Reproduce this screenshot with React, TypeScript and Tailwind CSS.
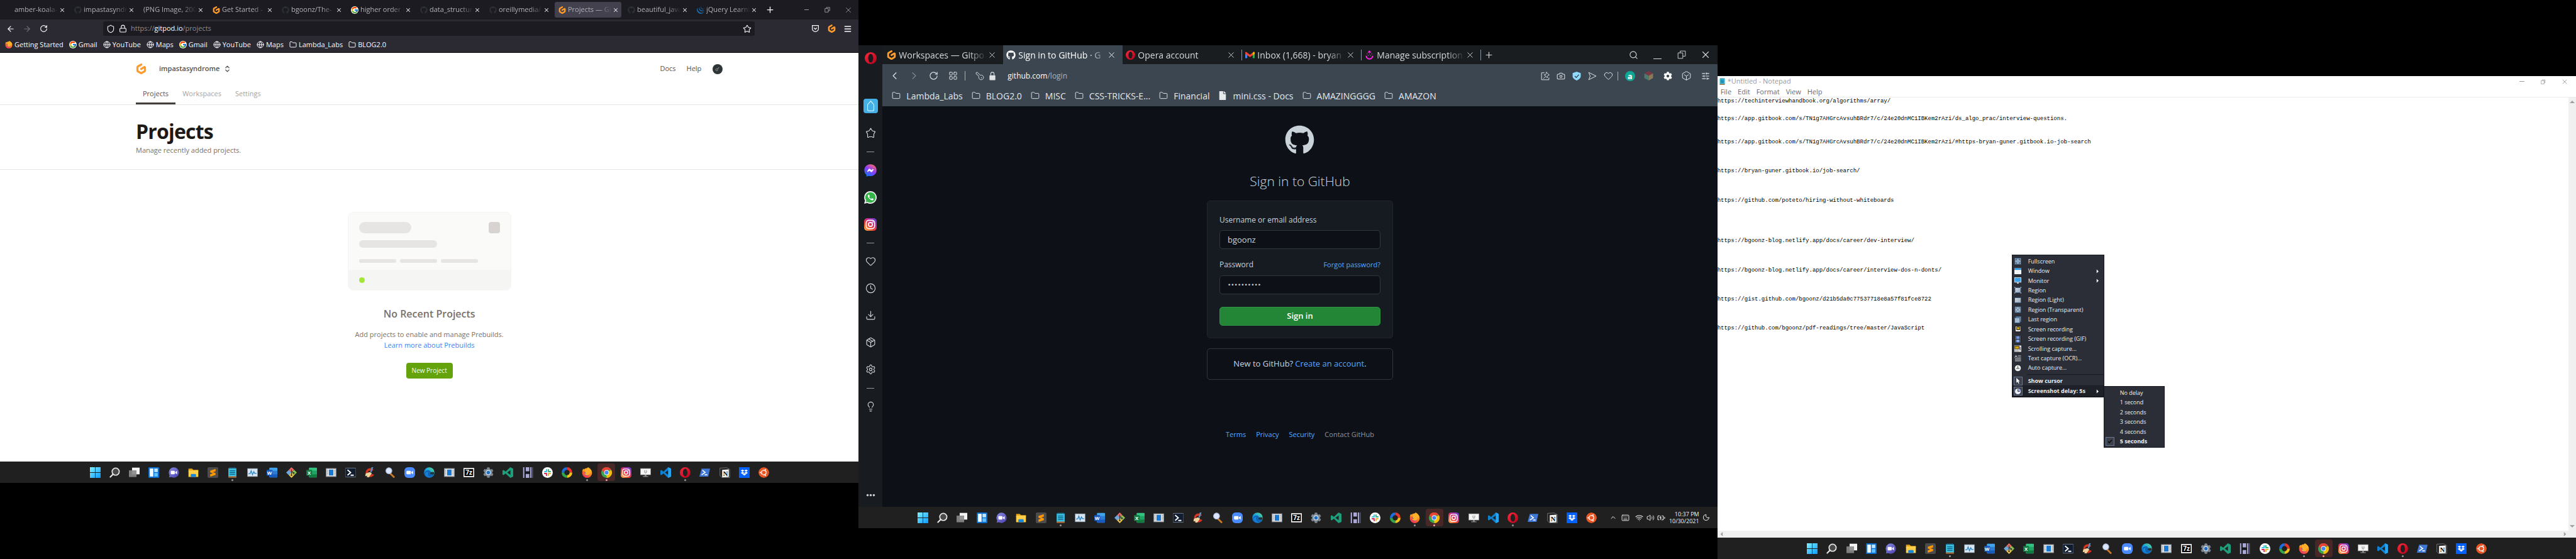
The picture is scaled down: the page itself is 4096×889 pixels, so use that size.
import React from "react";
import type { ReactNode } from "react";
import {
  ArrowLeft, ArrowRight, RotateCw, Shield, Lock, Star, Menu, Globe, Folder, X, Plus, Minus,
  ChevronUp, ChevronLeft, ChevronRight, Heart, Clock, Package, Settings, Lightbulb, Ellipsis, Search, LayoutGrid,
  Camera, SlidersHorizontal, KeyRound, Keyboard, Wifi, Volume2, BatteryCharging, Moon, Download,
  ChevronsUpDown,
} from "lucide-react";
import { FaGithub, FaCog, FaUbuntu, FaDropbox, FaFacebookMessenger, FaFile } from "react-icons/fa";
import { FcGoogle } from "react-icons/fc";
import { SiGitpod, SiJquery } from "react-icons/si";

/* ---------- shared artwork ---------- */

function Defs() {
  return (
    <svg className="absolute size-0" aria-hidden="true">
      <defs>
        <linearGradient id="g-win" x1="0" y1="0" x2="1" y2="1"><stop offset="0" stopColor="#7ff0ff" /><stop offset="1" stopColor="#0a9bff" /></linearGradient>
        <linearGradient id="g-ig" x1="0" y1="1" x2="0.8" y2="0"><stop offset="0" stopColor="#fdc04b" /><stop offset="0.4" stopColor="#f0452f" /><stop offset="0.7" stopColor="#c72a92" /><stop offset="1" stopColor="#6b3fd0" /></linearGradient>
        <linearGradient id="g-msg" x1="0.2" y1="1" x2="0.8" y2="0"><stop offset="0" stopColor="#0a7cff" /><stop offset="0.5" stopColor="#8a3cff" /><stop offset="1" stopColor="#ff6a6a" /></linearGradient>
        <linearGradient id="g-opera" x1="0" y1="0" x2="1" y2="1"><stop offset="0" stopColor="#ff2a3c" /><stop offset="1" stopColor="#b4001a" /></linearGradient>
        <linearGradient id="g-edge" x1="0" y1="1" x2="1" y2="0"><stop offset="0" stopColor="#0c59c4" /><stop offset="0.5" stopColor="#1ba0e0" /><stop offset="1" stopColor="#5fe08a" /></linearGradient>
        <linearGradient id="g-fox" x1="0.2" y1="1" x2="0.8" y2="0"><stop offset="0" stopColor="#f0246a" /><stop offset="0.5" stopColor="#ff7a1a" /><stop offset="1" stopColor="#ffde3b" /></linearGradient>
        <linearGradient id="g-chat" x1="0" y1="0" x2="1" y2="1"><stop offset="0" stopColor="#8a8ce0" /><stop offset="1" stopColor="#4a3fae" /></linearGradient>
        <linearGradient id="g-grey" x1="0" y1="0" x2="1" y2="1"><stop offset="0" stopColor="#d9dee5" /><stop offset="1" stopColor="#93a3b8" /></linearGradient>
      </defs>
    </svg>
  );
}

function Art({ size = "size-[17px]", children }: { size?: string; children: ReactNode }) {
  return <svg viewBox="0 0 24 24" className={`${size} shrink-0`} aria-hidden="true">{children}</svg>;
}

const code = "M17.5 0 L24 3 V21 L17.5 24 L7 14.2 L2.4 17.8 L0 16.6 V7.4 L2.4 6.2 L7 9.8 Z M17.8 6.8 L10.6 12 L17.8 17.2 Z";

function Gitpod({ size }: { size: string }) {
  return <SiGitpod className={`${size} shrink-0 text-[#ff9a2b]`} />;
}

function OperaRing({ size }: { size: string }) {
  return (
    <Art size={size}>
      <path fillRule="evenodd" fill="url(#g-opera)" d="M12 0a12 12 0 1 0 0 24a12 12 0 1 0 0-24Zm0 3.4c3 0 5 3.9 5 8.6s-2 8.6-5 8.6s-5-3.9-5-8.6s2-8.6 5-8.6Z" />
    </Art>
  );
}

function Firefox({ size }: { size: string }) {
  return (
    <Art size={size}>
      <circle cx="12" cy="13" r="11" fill="url(#g-fox)" />
      <circle cx="12" cy="13" r="6" fill="#7a3fe0" />
      <path d="M14 0c4 2 8 6 9 11c-2-3-4-3-5-3c2 5 0 9-4 10c-5 1-8-2-8-5c1 1 3 1 4 0c-3-1-4-4-2-6c-3-1-6 1-7 4c0-3 1-6 3-8l1 3c2-1 4-1 6 0c0-2 1-4 3-6Z" fill="#ffb02a" />
    </Art>
  );
}

function Instagram({ size }: { size: string }) {
  return (
    <Art size={size}>
      <rect width="24" height="24" rx="6" fill="url(#g-ig)" />
      <rect x="4" y="4" width="16" height="16" rx="5" fill="none" stroke="#fff" strokeWidth="2" />
      <circle cx="12" cy="12" r="3.8" fill="none" stroke="#fff" strokeWidth="2" />
      <circle cx="16.6" cy="7.4" r="1.2" fill="#fff" />
    </Art>
  );
}

function NotepadIcon({ size }: { size?: string }) {
  return (
    <Art size={size}>
      <rect x="3" y="2" width="18" height="21" rx="1.5" fill="#3cc0e0" />
      <rect x="3" y="20.5" width="18" height="3" fill="#b4622a" />
      <path d="M6 8h12M6 12h12M6 16h12" stroke="#0b5f86" strokeWidth="1.8" />
      <path d="M6 0v4M10 0v4M14 0v4M18 0v4" stroke="#136a90" strokeWidth="1.6" />
    </Art>
  );
}

const letter = "font-['Open_Sans'] font-bold";

function Office({ dark, mid, light, text }: { dark: string; mid: string; light: string; text: string }) {
  return (
    <Art>
      <rect x="6" y="1" width="18" height="22" rx="1.5" fill={light} />
      <rect x="6" y="8" width="18" height="8" fill={mid} />
      <path d="M6 16h18v5.5a1.5 1.5 0 0 1-1.5 1.5h-15a1.5 1.5 0 0 1-1.5-1.5Z" fill={dark} />
      <rect x="0" y="6" width="13" height="13" rx="1.5" fill={dark} />
      <text x="6.5" y="16.4" textAnchor="middle" fontSize="11" fill="#fff" className={letter}>{text}</text>
    </Art>
  );
}

function AppWindow() {
  return (
    <Art>
      <rect x="1" y="3" width="22" height="18" fill="#e9ecef" stroke="#8b9299" strokeWidth="1.5" />
      <rect x="7" y="5.5" width="10" height="13" fill="#1979d2" />
      <path d="M4 6v12M20 6v12" stroke="#6f7780" strokeWidth="1.5" strokeDasharray="2 1.5" />
    </Art>
  );
}

const taskIcons: { name: string; dot?: boolean; hot?: boolean; art: ReactNode }[] = [
  { name: "Start", art: <Art><path fill="url(#g-win)" d="M0 0h11.4v11.4H0ZM12.6 0H24v11.4H12.6ZM0 12.6h11.4V24H0ZM12.6 12.6H24V24H12.6Z" /></Art> },
  { name: "Search", art: <Art><circle cx="14" cy="10" r="8" fill="#4a4a4a" stroke="#e8e8e8" strokeWidth="2.4" /><path d="M8 16l-6 6" stroke="#e8e8e8" strokeWidth="3" strokeLinecap="round" /></Art> },
  { name: "Task view", art: <Art><rect x="7" y="1" width="17" height="15" fill="#f4f4f4" /><rect x="0" y="7" width="17" height="15" fill="#8a8a8a" opacity="0.9" /></Art> },
  { name: "Widgets", art: <Art><rect width="24" height="24" rx="2" fill="#0a6fd0" /><rect x="3" y="3" width="8" height="18" fill="#f5fbff" /><rect x="13" y="3" width="8" height="8" fill="#bfe6ff" /><rect x="13" y="13" width="8" height="8" fill="#64c2ff" /></Art> },
  { name: "Chat", art: <Art><circle cx="12" cy="12" r="11.5" fill="url(#g-chat)" /><path d="M1 23l2-8 6 6Z" fill="#6a68cf" /><rect x="5" y="8" width="9" height="8" rx="1.5" fill="#fff" /><path d="M15 11l4-3v8l-4-3Z" fill="#fff" /></Art> },
  { name: "File Explorer", art: <Art><path d="M1 3h8l3 3h11v4H1Z" fill="#e3a21a" /><rect x="1" y="7" width="22" height="15" rx="1" fill="#ffcf48" /><path d="M6 22v-5a2 2 0 0 1 2-2h8a2 2 0 0 1 2 2v5Z" fill="#1a86d8" /></Art> },
  { name: "Sublime Text", art: <Art><rect width="24" height="24" rx="3" fill="#4c4c4c" /><path d="M18 4v5l-6 2.2 6 2v4L6 21v-5l6-2.200-6-2v-4Z" fill="#ff9800" /></Art> },
  { name: "Notepad", dot: true, art: <NotepadIcon /> },
  { name: "Performance Monitor", art: <Art><rect x="1" y="3" width="22" height="18" fill="#d7e6f3" stroke="#8c99a5" /><path d="M3 15l4-1 2-6 3 9 3-7 2 4h4" fill="none" stroke="#2a7fc0" strokeWidth="1.8" /></Art> },
  { name: "Word", art: <Office dark="#185abd" mid="#2b7cd3" light="#41a5ee" text="W" /> },
  { name: "Git", art: <Art><path d="M12 0l6 6-6 6-6-6Z" fill="#ee6a5f" /><path d="M6 6l6 6-6 6-6-6Z" fill="#6fa8dc" /><path d="M18 6l6 6-6 6-6-6Z" fill="#8cc152" /><path d="M12 12l6 6-6 6-6-6Z" fill="#f2c94c" /><path d="M12 5v14M12 9l5 4" stroke="#333" strokeWidth="1.6" /><circle cx="12" cy="18" r="1.8" fill="#333" /><circle cx="17" cy="13" r="1.8" fill="#333" /></Art> },
  { name: "Excel", art: <Office dark="#107c41" mid="#21a366" light="#33c481" text="X" /> },
  { name: "App window", art: <AppWindow /> },
  { name: "PowerShell 7", art: <Art><rect y="2" width="24" height="20" rx="1.5" fill="#101c30" stroke="#8b9bb0" /><path d="M5 6l7 6-7 6M12 18h7" fill="none" stroke="#fff" strokeWidth="2.6" /></Art> },
  { name: "CCleaner", art: <Art><path d="M20 6a10 10 0 1 0 1 11l-5-2a5 5 0 1 1-1-6Z" fill="#d8341f" /><path d="M15 0h4l-4 12h-3Z" fill="#5a8ec2" /><path d="M2 14l9-3 5 3-7 9-5-1 2-3-5 1Z" fill="#f0d4a0" /></Art> },
  { name: "Everything", art: <Art><path d="M11 13l9 9" stroke="#c97a2a" strokeWidth="4" strokeLinecap="round" /><circle cx="9" cy="8" r="6.8" fill="#d9e6ff" stroke="#aab4d4" strokeWidth="1.5" /></Art> },
  { name: "Zoom", art: <Art><rect width="24" height="24" rx="8" fill="#4a8cff" /><rect x="4.5" y="8" width="10" height="8" rx="2" fill="#fff" /><path d="M15.5 11l4-3v8l-4-3Z" fill="#fff" /></Art> },
  { name: "Edge", art: <Art><circle cx="12" cy="12" r="11.8" fill="url(#g-edge)" /><path d="M23 14c-1 3-4 3-7 2c-3-1-2-3-1-5c0-3-3-5-7-4c-4 1-7 5-6 9c2-4 5-6 7-5c-2 5 1 10 7 11c4-1 6-4 7-8Z" fill="#0d4fa8" opacity="0.7" /><path d="M15 11c-1 2-2 4 1 5c3 1 5 1 7-1v-4Z" fill="#202020" opacity="0.85" /></Art> },
  { name: "App window 2", art: <AppWindow /> },
  { name: "7-Zip", art: <Art><rect x="1" y="3" width="22" height="18" fill="#000" stroke="#fff" strokeWidth="2.4" /><text x="12" y="17.5" textAnchor="middle" fontSize="14" fill="#fff" className={letter}>7z</text></Art> },
  { name: "Settings", art: <Art><FaCog size={24} color="#7d8791" /><circle cx="12" cy="12" r="5.5" fill="#dfe6ec" /><circle cx="12" cy="12" r="4" fill="#1a6fc4" /></Art> },
  { name: "VS Code Insiders", art: <Art><path fillRule="evenodd" d={code} fill="#1f9e7c" /></Art> },
  { name: "H", art: <Art><rect width="24" height="24" fill="#16161c" /><path d="M1 0h3v24H1ZM7 0h8v9H7ZM7 15h8v9H7ZM17 0h3v24h-3ZM22 0h1v24h-1Z" fill="#a9a7d4" /></Art> },
  { name: "Slack", art: <Art><circle cx="12" cy="12" r="12" fill="#fff" /><g strokeWidth="2.8" strokeLinecap="round"><path d="M10 5.5v4.500M5.500 10h3" stroke="#36c5f0" /><path d="M14 10h4.500M14 5.500v2" stroke="#2eb67d" /><path d="M14 14v4.500M18.500 14h-2" stroke="#ecb22e" /><path d="M10 14H5.500M10 18.500v-2" stroke="#e01e5a" /></g></Art> },
  { name: "ShareX", art: <Art><g fill="none" strokeWidth="6"><path d="M12 3a9 9 0 0 1 9 9" stroke="#e8352b" /><path d="M21 12a9 9 0 0 1-9 9" stroke="#f6c21c" /><path d="M12 21a9 9 0 0 1-9-9" stroke="#2fa84a" /><path d="M3 12a9 9 0 0 1 9-9" stroke="#1c6fe0" /></g></Art> },
  { name: "Firefox", dot: true, art: <Firefox size="size-[17px]" /> },
  { name: "Chrome", dot: true, hot: true, art: <Art><circle cx="12" cy="12" r="12" fill="#34a853" /><path d="M12 12L22.4 6A12 12 0 0 1 12 24Z" fill="#fbbc05" /><path d="M12 6.5H22.6A12 12 0 0 0 1.6 6L7 15Z" fill="#ea4335" /><circle cx="12" cy="12" r="5.6" fill="#fff" /><circle cx="12" cy="12" r="4.4" fill="#4285f4" /></Art> },
  { name: "Instagram", art: <Instagram size="size-[17px]" /> },
  { name: "Remote desktop", art: <Art><rect x="0.5" y="3" width="23" height="14" fill="#f5f5f5" stroke="#9a9a9a" /><path d="M10 7v4a2 2 0 0 0 4 0V7" fill="none" stroke="#777" strokeWidth="1.3" /><path d="M10 17h4v3h-4ZM6 20h12v2H6Z" fill="#8a8a8a" /></Art> },
  { name: "VS Code", art: <Art><path fillRule="evenodd" d={code} fill="#0f80cf" /><path d="M17.5 0L24 3v18l-6.5 3Z" fill="#27a5f0" /></Art> },
  { name: "Opera", dot: true, art: <OperaRing size="size-[17px]" /> },
  { name: "PowerShell", art: <Art><path d="M5 3h19l-4 18H0Z" fill="#3f78d4" /><path d="M7 7l6 5-8 5M12 17h6" fill="none" stroke="#fff" strokeWidth="2.2" /></Art> },
  { name: "Notion", art: <Art><path d="M1 2l15-1 7 4v18l-16 1-6-5Z" fill="#222" stroke="#aaa" strokeWidth="0.8" /><path d="M6 6l15-1v17L6 23Z" fill="#f5f5f5" /><text x="13.5" y="19.5" textAnchor="middle" fontSize="15" fill="#111" className="font-['Liberation_Serif'] font-bold">N</text></Art> },
  { name: "Dropbox", art: <Art><rect width="24" height="24" fill="#0061ff" /><FaDropbox x="4" y="4" size={16} color="#fff" /></Art> },
  { name: "Ubuntu", art: <Art><circle cx="12" cy="12" r="11" fill="#fff" /><FaUbuntu size={24} color="#e95420" /></Art> },
];

function Taskbar({ pad, tray }: { pad: string; tray?: ReactNode }) {
  return (
    <footer className={`flex h-[34px] shrink-0 items-center bg-[#202020] ${pad}`}>
      <div className="flex w-[1092px] shrink-0 justify-between">
        {taskIcons.map((t) => (
          <button
            key={t.name}
            aria-label={t.name}
            className={`relative flex size-[28px] items-center justify-center rounded-sm ${t.hot ? "bg-[#4a2727]" : ""}`}
          >
            {t.art}
            {t.dot && <span className={`absolute bottom-0 size-[3px] rounded-full ${t.hot ? "bg-[#ff9a9a]" : "bg-[#9a9a9a]"}`} />}
          </button>
        ))}
      </div>
      {tray}
    </footer>
  );
}

/* ---------- Firefox window ---------- */

const octo = <FaGithub className="size-[12px] shrink-0 text-[#2b3137]" />;

const ffTabs: { title: string; icon?: ReactNode; active?: boolean }[] = [
  { title: "amber-koala-", icon: <span className="size-[12px] shrink-0" /> },
  { title: "impastasyndr", icon: octo },
  { title: "(PNG Image, 200" },
  { title: "Get Started - ", icon: <Gitpod size="size-[12px]" /> },
  { title: "bgoonz/The-", icon: octo },
  { title: "higher order f", icon: <FcGoogle className="size-[12px] shrink-0 rounded-full bg-white" /> },
  { title: "data_structure", icon: octo },
  { title: "oreillymedia/", icon: octo },
  { title: "Projects — Git", icon: <Gitpod size="size-[12px]" />, active: true },
  { title: "beautiful_java", icon: octo },
  { title: "jQuery Learni", icon: <SiJquery className="size-[12px] shrink-0 text-[#1b74b8]" /> },
];

const ffMarks: { label: string; kind: "fox" | "google" | "globe" | "folder" }[] = [
  { label: "Getting Started", kind: "fox" },
  { label: "Gmail", kind: "google" },
  { label: "YouTube", kind: "globe" },
  { label: "Maps", kind: "globe" },
  { label: "Gmail", kind: "google" },
  { label: "YouTube", kind: "globe" },
  { label: "Maps", kind: "globe" },
  { label: "Lambda_Labs", kind: "folder" },
  { label: "BLOG2.0", kind: "folder" },
];

const markIcon = {
  fox: <Firefox size="size-[12px]" />,
  google: <FcGoogle className="size-[12px] rounded-full bg-white" />,
  globe: <Globe className="size-[12px]" strokeWidth={2} />,
  folder: <Folder className="size-[12px]" strokeWidth={2} />,
};

function FirefoxWindow() {
  return (
    <section className="flex h-full min-w-0 flex-col bg-white">
      <header className="flex h-[31px] shrink-0 items-stretch bg-[#1c1b22] text-[11px] text-[#b0b0b6]">
        {ffTabs.map((t) => (
          <div key={t.title} className="flex w-[110px] px-[2px] py-[3px]">
            <div className={`flex min-w-0 flex-1 items-center rounded-[3px] pr-[4px] pl-[6px] ${t.active ? "bg-[#42414d]" : ""}`}>
              {t.icon}
              <span className={`min-w-0 flex-1 overflow-hidden whitespace-nowrap mask-r-from-70% ${t.icon ? "ml-[3px]" : ""}`}>{t.title}</span>
              <button aria-label={`Close ${t.title}`} className="ml-px text-[#e8e8ec]"><X className="size-[10px]" strokeWidth={2.5} /></button>
            </div>
          </div>
        ))}
        <button aria-label="New tab" className="flex w-[29px] items-center justify-center text-white"><Plus className="size-[15px]" strokeWidth={2} /></button>
        <div className="ml-auto flex text-[#9a9aa0]">
          <button aria-label="Minimize" className="flex w-[33px] items-center justify-center"><span className="h-px w-[7px] bg-current" /></button>
          <button aria-label="Restore" className="flex w-[33px] items-center justify-center">
            <Art size="size-[9px]"><path d="M2 7h14v15H2ZM8 7V2h14v14h-6" fill="none" stroke="currentColor" strokeWidth="2.5" /></Art>
          </button>
          <button aria-label="Close" className="flex w-[33px] items-center justify-center"><X className="size-[14px]" strokeWidth={1.5} /></button>
        </div>
      </header>
      <div className="flex h-[29px] shrink-0 items-center bg-[#2b2a33] pl-[4px] text-[#fbfbfe]">
        <button aria-label="Back" className="flex w-[26px] justify-center"><ArrowLeft className="size-[14px]" /></button>
        <button aria-label="Forward" className="flex w-[26px] justify-center text-[#72717a]"><ArrowRight className="size-[14px]" /></button>
        <button aria-label="Reload" className="flex w-[26px] justify-center"><RotateCw className="size-[13px]" /></button>
        <div className="ml-[82px] flex h-[23px] flex-1 items-center rounded-[3px] bg-[#1c1b22] px-[5px] text-[11px]">
          <Shield className="size-[14px]" strokeWidth={1.8} />
          <Lock className="mx-[6px] size-[13px]" strokeWidth={2} />
          <span className="flex-1 text-[#8a8a92]">https://<span className="text-[#fbfbfe]">gitpod.io</span>/projects</span>
          <Star className="size-[14px]" strokeWidth={1.8} />
        </div>
        <div className="ml-[83px] flex pr-[4px]">
          <button aria-label="Pocket" className="flex w-[26px] justify-center">
            <Art size="size-[13px]"><path d="M3 3h18v9a9 9 0 0 1-18 0Z" fill="none" stroke="#fff" strokeWidth="2.2" /><path d="M7.5 9.5L12 14l4.5-4.5" fill="none" stroke="#fff" strokeWidth="2.4" /></Art>
          </button>
          <button aria-label="Gitpod" className="flex w-[26px] justify-center"><Gitpod size="size-[13px]" /></button>
          <button aria-label="Menu" className="flex w-[26px] justify-center"><Menu className="size-[14px]" strokeWidth={2.5} /></button>
        </div>
      </div>
      <nav className="flex h-[24px] shrink-0 items-center gap-[9px] border-b border-black bg-[#2b2a33] px-[8px] pb-px text-[11px] text-[#fbfbfe]">
        {ffMarks.map((m, i) => (
          <a key={i} href="#mark" className="flex items-center gap-[3px]">{markIcon[m.kind]}{m.label}</a>
        ))}
      </nav>

      <div className="flex h-[51px] items-center px-[216px] text-[11px] text-[#57534e]">
        <Gitpod size="size-[17px]" />
        <span className="ml-[20px] font-semibold">impastasyndrome</span>
        <ChevronsUpDown className="ml-[6px] size-[13px]" strokeWidth={2.5} />
        <a href="#docs" className="ml-auto">Docs</a>
        <a href="#help" className="ml-[17px]">Help</a>
        <span className="ml-[18px] flex size-[16px] items-center justify-center rounded-full bg-[#2e3538]">
          <Art size="size-[8px]"><circle cx="8" cy="15" r="5" fill="none" stroke="#b8ada0" strokeWidth="2" /><path d="M12 11l7-8" stroke="#b8ada0" strokeWidth="3" /></Art>
        </span>
      </div>
      <nav className="flex h-[32px] items-stretch border-b border-[#e4e4e4] px-[216px] text-[11px] text-[#a8a29e]">
        <a href="#projects" className="flex items-center border-b-[3px] border-[#44403c] px-[11px] text-[#57534e]">Projects</a>
        <a href="#workspaces" className="flex items-center border-b-[3px] border-transparent px-[11px]">Workspaces</a>
        <a href="#settings" className="flex items-center border-b-[3px] border-transparent px-[11px]">Settings</a>
      </nav>
      <div className="flex h-[103px] flex-col border-b border-[#e4e4e4] px-[216px] pt-[20px]">
        <h1 className="text-[32px] leading-[44px] font-bold tracking-tight text-[#1c1917]">Projects</h1>
        <p className="text-[11px] leading-[15px] text-[#78716c]">Manage recently added projects.</p>
      </div>
      <main className="flex flex-1 flex-col items-center pt-[67px]">
        <div className="flex h-[125px] w-[260px] flex-col overflow-hidden rounded-[9px] border border-[#f5f5f4] bg-[#fafaf9]">
          <div className="flex flex-1 flex-col px-[17px] pt-[15px]">
            <div className="flex justify-between">
              <span className="h-[18px] w-[83px] rounded-full bg-[#e7e5e4]" />
              <span className="size-[18px] rounded-[4px] bg-[#d6d3d1]" />
            </div>
            <span className="mt-[11px] h-[12px] w-[124px] rounded-full bg-[#e7e5e4]" />
            <div className="mt-[18px] flex gap-[6px]">
              <span className="h-[6px] w-[59px] rounded-full bg-[#e7e5e4]" />
              <span className="h-[6px] w-[59px] rounded-full bg-[#e7e5e4]" />
              <span className="h-[6px] w-[59px] rounded-full bg-[#e7e5e4]" />
            </div>
          </div>
          <div className="flex h-[32px] items-center bg-[#f5f5f4] px-[17px]"><span className="size-[9px] rounded-full bg-[#a3e635]" /></div>
        </div>
        <h2 className="mt-[25px] text-[16px] leading-[24px] font-semibold text-[#78716c]">No Recent Projects</h2>
        <p className="mt-[12px] text-[11px] leading-[17px] text-[#78716c]">Add projects to enable and manage Prebuilds.</p>
        <a href="#prebuilds" className="text-[11px] leading-[17px] text-[#3b82f6]">Learn more about Prebuilds</a>
        <button className="mt-[20px] h-[25px] rounded-[4px] bg-[#65a30d] px-[9px] text-[10px] text-[#f7fee7]">New Project</button>
      </main>
      <Taskbar pad="pl-[137px]" />
    </section>
  );
}

/* ---------- Opera window ---------- */

const opTabs: { title: string; icon: ReactNode; active?: boolean; rule?: boolean }[] = [
  { title: "Workspaces — Gitpo", icon: <Gitpod size="size-[15px]" /> },
  { title: "Sign in to GitHub · G", icon: <FaGithub className="size-[15px] shrink-0 text-white" />, active: true },
  { title: "Opera account", icon: <OperaRing size="size-[15px]" />, rule: true },
  { title: "Inbox (1,668) - bryan", rule: true, icon: <Art size="size-[15px]"><path d="M0 5v15h5V9.500Z" fill="#4285f4" /><path d="M24 5v15h-5V9.500Z" fill="#34a853" /><path d="M0 5l2-1.500L12 11l10-7.500L24 5v4l-12 8.500L0 9Z" fill="#ea4335" /><path d="M19 6.500L22 3.500 24 5v4l-5 3.500Z" fill="#fbbc05" /></Art> },
  { title: "Manage subscription", rule: true, icon: <Art size="size-[15px]"><path d="M12 0l5 6H7Z" fill="#ff1fe8" /><path d="M5 9h2M11 9h2M17 9h2M8 13h2M14 13h2" stroke="#ff1fe8" strokeWidth="2" /><path d="M4 14a8 8 0 0 0 16 0" fill="none" stroke="#ff1fe8" strokeWidth="3.5" /></Art> },
];

const opMarks = ["Lambda_Labs", "BLOG2.0", "MISC", "CSS-TRICKS-E...", "Financial", "mini.css - Docs", "AMAZINGGGG", "AMAZON"];

function SideButton({ label, children }: { label: string; children: ReactNode }) {
  return <button aria-label={label} className="flex h-[43px] w-full items-center justify-center">{children}</button>;
}

function SideRule() {
  return <div className="flex h-[16px] w-full items-center justify-center"><span className="h-px w-[12px] bg-[#8d99a3]" /></div>;
}

function OperaSidebar() {
  const line = "size-[17px]";
  return (
    <aside className="flex w-[38px] shrink-0 flex-col items-center bg-[#181b1f] text-[#d4d8dc]">
      <button aria-label="Opera" className="flex h-[40px] items-center justify-center"><OperaRing size="size-[19px]" /></button>
      <div className="mt-[35px] flex w-full flex-col">
        <SideButton label="Workspace">
          <span className="flex size-[23px] items-center justify-center rounded-[4px] bg-[#45b0e6]">
            <Art size="size-[17px]"><path d="M12 1l7 8v11a3 3 0 0 1-3 3H8a3 3 0 0 1-3-3V9Z" fill="none" stroke="#e8f6ff" strokeWidth="1.5" /></Art>
          </span>
        </SideButton>
        <SideButton label="Pinboards"><Art size={line}><path d="M12 1.5l3.500 5.500L22 9l-3 5.500V21a1 1 0 0 1-1.500.800L15 20.500H9L6.500 21.800A1 1 0 0 1 5 21v-6.500L2 9l6.500-2Z" fill="none" stroke="currentColor" strokeWidth="1.6" strokeLinejoin="round" /></Art></SideButton>
        <SideRule />
        <SideButton label="Messenger"><Art size="size-[20px]"><circle cx="12" cy="12" r="7" fill="#fff" /><FaFacebookMessenger size={24} fill="url(#g-msg)" /></Art></SideButton>
        <SideButton label="WhatsApp"><Art size="size-[20px]"><path d="M12 0a12 12 0 1 1-6 22.400L0 24l1.700-6A12 12 0 0 1 12 0Z" fill="#f2f2f2" /><path d="M12 2a10 10 0 1 1-5.500 18.400L3 21.200l1-3.500A10 10 0 0 1 12 2Z" fill="#35b449" /><path d="M8.500 6.500c-2 1-2 4 .500 7s6 4.500 8 3.500c1-.700 1-2 .500-2.300l-2.500-1.200-1.400 1.500c-1.800-.700-3.200-2-4-3.700l1.200-1.500-1-2.600c-.300-.700-.800-.900-1.300-.700Z" fill="#fff" /></Art></SideButton>
        <SideButton label="Instagram"><Instagram size="size-[20px]" /></SideButton>
        <SideRule />
        <SideButton label="Favourites"><Heart className={line} strokeWidth={1.6} /></SideButton>
        <SideButton label="History"><Clock className={line} strokeWidth={1.6} /></SideButton>
        <SideButton label="Downloads"><Download className={line} strokeWidth={1.6} /></SideButton>
        <SideButton label="Extensions"><Package className={line} strokeWidth={1.6} /></SideButton>
        <SideButton label="Settings"><Settings className={line} strokeWidth={1.6} /></SideButton>
        <SideRule />
        <SideButton label="Tips"><Lightbulb className={line} strokeWidth={1.6} /></SideButton>
      </div>
      <button aria-label="More" className="mt-auto flex h-[37px] items-center"><Ellipsis className="size-[17px]" strokeWidth={3} /></button>
    </aside>
  );
}

function OperaWindow() {
  const small = "flex w-[25px] justify-center";
  const wide = "flex w-[30px] justify-center";
  return (
    <section className="flex h-full min-w-0 flex-col bg-[#0d1117]">
      <div className="flex min-h-0 flex-1">
        <OperaSidebar />
        <div className="flex min-w-0 flex-1 flex-col">
          <header className="flex h-[30px] shrink-0 items-stretch bg-[#1a1d20] pl-[2px] text-[14px] text-[#d5d9dc]">
            {opTabs.map((t) => (
              <div key={t.title} className={`flex w-[190px] items-center pl-[5px] ${t.active ? "bg-[#3b4650] text-white" : ""}`}>
                {t.icon}
                <span className="ml-[4px] min-w-0 flex-1 overflow-hidden whitespace-nowrap mask-r-from-80%">{t.title}</span>
                <button aria-label={`Close ${t.title}`} className="mr-[4px] ml-px"><X className="size-[15px]" strokeWidth={1.5} /></button>
                <span className={`ml-[5px] h-[17px] w-px ${t.rule ? "bg-[#8d9aa5]" : ""}`} />
              </div>
            ))}
            <button aria-label="New tab" className="flex w-[24px] items-center justify-center"><Plus className="size-[15px]" strokeWidth={1.8} /></button>
            <div className="ml-auto flex">
              <button aria-label="Search tabs" className="flex w-[38px] items-center justify-center"><Search className="size-[15px]" strokeWidth={1.8} /></button>
              <button aria-label="Minimize" className="flex w-[38px] items-end justify-center pb-[8px]"><span className="h-px w-[13px] bg-current" /></button>
              <button aria-label="Restore" className="flex w-[38px] items-center justify-center">
                <Art size="size-[14px]"><path d="M2 7h13v15H2ZM8 7V2h14v14h-7" fill="none" stroke="currentColor" strokeWidth="1.6" /></Art>
              </button>
              <button aria-label="Close" className="flex w-[38px] items-center justify-center"><X className="size-[18px]" strokeWidth={1.5} /></button>
            </div>
          </header>
          <div className="flex h-[37px] shrink-0 items-center bg-[#3b4650] pl-[4px] text-[#dfe3e6]">
            <button aria-label="Back" className="flex w-[31px] justify-center"><ChevronLeft className="size-[19px]" strokeWidth={1.5} /></button>
            <button aria-label="Forward" className="flex w-[31px] justify-center text-[#7d8890]"><ChevronRight className="size-[19px]" strokeWidth={1.5} /></button>
            <button aria-label="Reload" className="flex w-[31px] justify-center"><RotateCw className="size-[15px]" strokeWidth={1.8} /></button>
            <button aria-label="Start page" className="flex w-[31px] justify-center"><LayoutGrid className="size-[15px]" strokeWidth={1.6} /></button>
            <span className="ml-[3px] h-[15px] w-px bg-[#aab2b8]" />
            <KeyRound className="ml-[16px] size-[14px] rotate-90" strokeWidth={1.6} />
            <Art size="size-[14px] ml-[6px]"><rect x="4" y="10" width="16" height="13" rx="1.5" fill="#dfe3e6" /><path d="M7.5 10V6a4.500 4.500 0 0 1 9 0v4" fill="none" stroke="#dfe3e6" strokeWidth="1.8" /></Art>
            <span className="ml-[17px] text-[12px] text-[#aab3ba]"><span className="text-white">github.com</span>/login</span>
            <div className="ml-auto flex items-center">
              <button aria-label="Pin" className={small}>
                <Art size="size-[14px]"><path d="M10 3H2v19h20v-6" fill="none" stroke="currentColor" strokeWidth="1.7" /><path d="M15 1l8 8-3 1-3 4 1 3-9-9 3 1 3-4ZM13 13l-6 6" fill="none" stroke="currentColor" strokeWidth="1.6" strokeLinejoin="round" /></Art>
              </button>
              <button aria-label="Snapshot" className={small}><Camera className="size-[14px]" strokeWidth={1.8} /></button>
              <button aria-label="Ad blocker" className={small}>
                <Art size="size-[14px]"><path d="M12 0l11 4v9c0 5-6 9-11 11C7 22 1 18 1 13V4Z" fill="#8fdcff" /><path d="M7 12l4 4 7-8" fill="none" stroke="#2a3a48" strokeWidth="2.2" /></Art>
              </button>
              <button aria-label="Flow" className={small}>
                <Art size="size-[14px]"><path d="M2 2l20 10L2 22l4-10Z" fill="none" stroke="currentColor" strokeWidth="1.7" strokeLinejoin="round" /></Art>
              </button>
              <button aria-label="Bookmark" className={small}><Heart className="size-[15px]" strokeWidth={1.6} /></button>
              <span className="ml-[2px] h-[14px] w-px bg-[#aab2b8]" />
              <button aria-label="Extension a" className={`${wide} ml-[4px]`}><span className="flex size-[16px] items-center justify-center rounded-full bg-[#0fa697] text-[13px] leading-[14px] font-bold text-white">a</span></button>
              <button aria-label="Cube extension" className={wide}>
                <Art size="size-[15px]"><path d="M12 0l11 6-11 6L1 6Z" fill="#7a3844" /><path d="M1 6l11 6v12L1 18Z" fill="#4d7a6c" /><path d="M23 6l-11 6v12l11-6Z" fill="#8a7a55" /></Art>
              </button>
              <button aria-label="Extension settings" className={wide}><FaCog className="size-[14px] text-white" /></button>
              <button aria-label="Extensions" className={wide}>
                <Art size="size-[15px]"><path d="M12 1l10 5.500v11L12 23 2 17.500v-11ZM12 23V13M12 13l6-4M12 13L6 9" fill="none" stroke="currentColor" strokeWidth="1.6" strokeLinejoin="round" /></Art>
              </button>
              <button aria-label="Easy setup" className={`${wide} mr-[4px]`}><SlidersHorizontal className="size-[14px]" strokeWidth={2} /></button>
            </div>
          </div>
          <nav className="flex h-[30px] shrink-0 items-center gap-[14px] bg-[#3b4650] pb-[4px] pl-[15px] text-[14px] text-[#e6e9eb]">
            {opMarks.map((m) => (
              <a key={m} href="#mark" className="flex items-center gap-[9px] whitespace-nowrap">
                {m.startsWith("mini") ? <FaFile className="size-[14px]" /> : <Folder className="size-[14px]" strokeWidth={1.6} />}
                {m}
              </a>
            ))}
          </nav>

          <main className="flex flex-1 flex-col items-center pt-[30px] text-[#c9d1d9]">
            <FaGithub className="size-[47px]" />
            <h1 className="mt-[26px] text-[21px] leading-[32px] font-light">Sign in to GitHub</h1>
            <form className="mt-[15px] flex w-[296px] flex-col rounded-[5px] border border-[#21262d] bg-[#161b22] p-[19px]" onSubmit={(e) => e.preventDefault()}>
              <label htmlFor="login" className="text-[12px] leading-[22px]">Username or email address</label>
              <input id="login" defaultValue="bgoonz" className="mt-[5px] h-[30px] rounded-[5px] border border-[#30363d] bg-[#0d1117] px-[12px] text-[13px]" />
              <div className="mt-[14px] flex items-center justify-between">
                <label htmlFor="password" className="text-[12px] leading-[22px]">Password</label>
                <a href="#forgot" className="text-[11px] text-[#58a6ff]">Forgot password?</a>
              </div>
              <input id="password" type="password" defaultValue="0123456789" className="mt-[6px] h-[30px] rounded-[5px] border border-[#30363d] bg-[#0d1117] px-[12px] font-['DejaVu_Sans'] text-[9px]" />
              <button className="mt-[20px] h-[30px] rounded-[5px] border border-[#2f9444] bg-[#238636] text-[13px] font-semibold text-white">Sign in</button>
            </form>
            <p className="mt-[16px] flex h-[50px] w-[296px] items-center justify-center gap-[3px] rounded-[5px] border border-[#30363d] text-[13px]">
              New to GitHub? <span><a href="#join" className="text-[#58a6ff]">Create an account</a>.</span>
            </p>
            <div className="mt-[78px] flex gap-[16px] text-[11px] leading-[18px] text-[#58a6ff]">
              <a href="#terms">Terms</a>
              <a href="#privacy">Privacy</a>
              <a href="#security">Security</a>
              <a href="#contact" className="text-[#8b949e]">Contact GitHub</a>
            </div>
          </main>
        </div>
      </div>
      <Taskbar
        pad="pl-[88px]"
        tray={
          <div className="ml-auto flex items-center pr-[12px] text-[#f0f0f0]">
            <ChevronUp className="size-[12px]" strokeWidth={2} />
            <Keyboard className="ml-[7px] size-[13px]" strokeWidth={1.8} />
            <Wifi className="ml-[9px] size-[13px]" strokeWidth={2} />
            <Volume2 className="ml-[5px] size-[13px]" strokeWidth={1.8} />
            <BatteryCharging className="ml-[4px] size-[13px]" strokeWidth={2} />
            <div className="ml-[6px] text-right text-[9px] leading-[11px] whitespace-nowrap">
              <div>10:37 PM</div>
              <div>10/30/2021</div>
            </div>
            <Moon className="ml-[5px] size-[12px]" strokeWidth={2} />
          </div>
        }
      />
    </section>
  );
}

/* ---------- Notepad window ---------- */

const notes = [
  "https://techinterviewhandbook.org/algorithms/array/", "", "",
  "https://app.gitbook.com/s/TN1g7AHGrcAvsuhBRdr7/c/24e20dnMC1IBKem2rAzi/ds_algo_prac/interview-questions.", "", "", "",
  "https://app.gitbook.com/s/TN1g7AHGrcAvsuhBRdr7/c/24e20dnMC1IBKem2rAzi/#https-bryan-guner.gitbook.io-job-search", "", "", "", "",
  "https://bryan-guner.gitbook.io/job-search/", "", "", "", "",
  "https://github.com/poteto/hiring-without-whiteboards", "", "", "", "", "", "",
  "https://bgoonz-blog.netlify.app/docs/career/dev-interview/", "", "", "", "",
  "https://bgoonz-blog.netlify.app/docs/career/interview-dos-n-donts/", "", "", "", "",
  "https://gist.github.com/bgoonz/d21b5da0c77537718e8a57f81fce8722", "", "", "", "",
  "https://github.com/bgoonz/pdf-readings/tree/master/JavaScript",
].join("\n");

const ic = "size-[11px]";
const menuItems: { label: string; sub?: boolean; art: ReactNode }[] = [
  { label: "Fullscreen", art: <Art size={ic}><rect x="1" y="1" width="22" height="22" fill="#8ea6c0" stroke="#2d5680" strokeWidth="2" /><path d="M5 9V5h4M15 5h4v4M19 15v4h-4M9 19H5v-4" fill="none" stroke="#24374d" strokeWidth="2" /></Art> },
  { label: "Window", sub: true, art: <Art size={ic}><rect y="1" width="24" height="21" fill="#f3f5f7" /><rect y="1" width="24" height="6" fill="#2a94dc" /></Art> },
  { label: "Monitor", sub: true, art: <Art size={ic}><rect x="1" y="1" width="22" height="16" fill="#3ba0e8" stroke="#dfe3e6" strokeWidth="2" /><path d="M9 18h6v4H9Z" fill="#dfe3e6" /></Art> },
  { label: "Region", art: <Art size={ic}><rect x="2" y="3" width="20" height="18" fill="url(#g-grey)" stroke="#2d5680" strokeWidth="2" /><path d="M0 1h3v3H0ZM21 1h3v3h-3ZM0 20h3v3H0ZM21 20h3v3h-3Z" fill="#cfe0f2" /></Art> },
  { label: "Region (Light)", art: <Art size={ic}><rect x="1" y="3" width="22" height="18" fill="url(#g-grey)" stroke="#2d5680" strokeWidth="2" /></Art> },
  { label: "Region (Transparent)", art: <Art size={ic}><rect x="2" y="2" width="20" height="20" fill="#a9bacb" stroke="#2d5680" strokeWidth="2" /><path d="M3 3h6v6H3ZM15 3h6v6h-6ZM9 9h6v6H9ZM3 15h6v6H3ZM15 15h6v6h-6Z" fill="#7890a8" /></Art> },
  { label: "Last region", art: <Art size={ic}><rect x="5" y="1" width="18" height="18" fill="#7794b2" stroke="#35608a" strokeWidth="2" /><rect x="1" y="5" width="18" height="18" fill="#a3bad0" stroke="#35608a" strokeWidth="2" /></Art> },
  { label: "Screen recording", art: <Art size={ic}><rect x="3" y="1" width="19" height="20" fill="#f1f1f1" stroke="#111" strokeWidth="2" /><rect x="8" y="4" width="10" height="10" fill="#d9a400" stroke="#111" strokeWidth="2" /></Art> },
  { label: "Screen recording (GIF)", art: <Art size={ic}><rect x="1" width="22" height="24" fill="#111" /><rect x="6" y="1" width="12" height="10" fill="#6f94dc" /><rect x="6" y="13" width="12" height="10" fill="#86a8e6" /><path d="M3.5 1v23M20.5 1v23" stroke="#ddd" strokeWidth="2" strokeDasharray="2 2" /></Art> },
  { label: "Scrolling capture...", art: <Art size={ic}><rect y="1" width="24" height="22" fill="#e8e8e8" /><rect x="2" y="3" width="14" height="10" fill="#d9a400" stroke="#111" strokeWidth="1.5" /><path d="M2 17h14M2 20h14" stroke="#444" strokeWidth="1.5" strokeDasharray="2 1.5" /><path d="M20 6v12" stroke="#777" strokeWidth="4" /></Art> },
  { label: "Text capture (OCR)...", art: <Art size={ic}><path d="M12 4h11M12 9h11M2 14h21M2 18h21M2 22h21" stroke="#c9ccd0" strokeWidth="2" /><path d="M1 11L5.500 2 10 11M3 8h5" fill="none" stroke="#c9ccd0" strokeWidth="2" /></Art> },
  { label: "Auto capture...", art: <Art size={ic}><circle cx="12" cy="12" r="10.5" fill="#eef0ee" /><path d="M12 5v8h6M6 13h6" fill="none" stroke="#444" strokeWidth="2" /></Art> },
];

function Arrow() {
  return <Art size="size-[7px]"><path d="M6 2l11 10L6 22Z" fill="#f2f2f2" /></Art>;
}

const rowBase = "flex w-full min-h-0 flex-1 items-center text-left text-[9px] leading-[12px]";

function CaptureMenu() {
  return (
    <div className="absolute top-[284px] left-[468px] flex h-[227px] w-[147px] flex-col border border-[#17191e] bg-[#2b2e37] pt-[2px] text-[#eceef0]">
      {menuItems.map((m) => (
        <button key={m.label} className={rowBase}>
          <span className="flex w-[18px] justify-center">{m.art}</span>
          <span className="ml-[7px] flex-1">{m.label}</span>
          {m.sub && <span className="mr-[6px]"><Arrow /></span>}
        </button>
      ))}
      <div className="my-[2px] ml-[23px] h-px shrink-0 bg-[#17191e]" />
      <button className={`${rowBase} font-bold`}>
        <span className="flex w-[18px] justify-center">
          <span className="flex size-[14px] items-center justify-center border border-[#6b7693] bg-[#3b404c]">
            <Art size={ic}><path d="M7 2v17l4-4 3 7 3-1-3-7h5Z" fill="#fff" /></Art>
          </span>
        </span>
        <span className="ml-[7px]">Show cursor</span>
      </button>
      <button className={`${rowBase} border border-[#17191e] bg-[#1e2127] font-bold`}>
        <span className="flex w-[16px] justify-center">
          <span className="flex size-[14px] items-center justify-center border border-[#6b7693] bg-[#3b404c]">
            <Art size={ic}><circle cx="12" cy="12" r="10" fill="#e9edf5" /><path d="M12 3v9h9a9 9 0 0 0-9-9Z" fill="#8fa8ea" /><path d="M12 4v8h7" fill="none" stroke="#334" strokeWidth="2" /></Art>
          </span>
        </span>
        <span className="ml-[8px] flex-1 whitespace-nowrap">Screenshot delay: 5s</span>
        <span className="mr-[5px]"><Arrow /></span>
      </button>
    </div>
  );
}

function DelayMenu() {
  const items = ["No delay", "1 second", "2 seconds", "3 seconds", "4 seconds", "5 seconds"];
  return (
    <div className="absolute top-[493px] left-[614px] flex h-[98px] w-[97px] flex-col border border-[#17191e] bg-[#2b2e37] pt-[2px] pb-px text-[#eceef0]">
      {items.map((label, i) => (
        <button key={label} className={`${rowBase} ${i === 5 ? "font-bold" : ""}`}>
          <span className="flex w-[18px] justify-center">
            {i === 5 && (
              <span className="flex size-[14px] items-center justify-center border border-[#6b7693] bg-[#3b404c]">
                <Art size="size-[8px]"><path d="M3 12l6 6L21 5" fill="none" stroke="#000" strokeWidth="4" /></Art>
              </span>
            )}
          </span>
          <span className="ml-[7px]">{label}</span>
        </button>
      ))}
    </div>
  );
}

function NotepadWindow() {
  const ctl = "flex w-[34px] items-center justify-center";
  return (
    <section className="relative flex h-full min-w-0 flex-col bg-white">
      <header className="flex h-[17px] shrink-0 items-center pl-[2px] text-[11px] text-[#9a9a9a]">
        <NotepadIcon size="size-[11px]" />
        <span className="ml-[3px]">*Untitled - Notepad</span>
        <div className="ml-auto flex pr-px">
          <button aria-label="Minimize" className={ctl}><span className="h-px w-[8px] bg-current" /></button>
          <button aria-label="Restore" className={ctl}>
            <Art size="size-[8px]"><path d="M1 7h15v15H1ZM6 3h14v15" fill="none" stroke="currentColor" strokeWidth="2.5" /></Art>
          </button>
          <button aria-label="Close" className={ctl}><X className="size-[12px]" strokeWidth={1.8} /></button>
        </div>
      </header>
      <nav className="flex h-[17px] shrink-0 items-center gap-[10px] border-b border-[#ececec] pl-[5px] text-[11px] text-[#6a6a6a]">
        <button>File</button><button>Edit</button><button>Format</button><button>View</button><button>Help</button>
      </nav>
      <div className="flex min-h-0 flex-1">
        <textarea
          aria-label="Document text"
          spellCheck={false}
          defaultValue={notes}
          className="min-w-0 flex-1 resize-none overflow-hidden pt-[2px] font-['Liberation_Mono',monospace] text-[9px] leading-[1.03] whitespace-pre text-black outline-none"
        />
        <div className="flex w-[12px] flex-col items-center justify-between bg-[#f0f0f0] py-[3px]">
          <Art size="size-[8px]"><path d="M0 18L12 6l12 12Z" fill="#a0a0a0" /></Art>
          <Art size="size-[8px]"><path d="M0 6l12 12L24 6Z" fill="#a0a0a0" /></Art>
        </div>
      </div>
      <div className="flex h-[11px] shrink-0 items-center justify-between bg-[#f0f0f0] pr-[14px] pl-[3px]">
        <Art size="size-[7px]"><path d="M18 0L6 12l12 12Z" fill="#a0a0a0" /></Art>
        <Art size="size-[7px]"><path d="M6 0l12 12L6 24Z" fill="#a0a0a0" /></Art>
      </div>
      <Taskbar pad="pl-[137px]" />
      <CaptureMenu />
      <DelayMenu />
    </section>
  );
}

export default function App() {
  return (
    <div className="grid h-screen grid-cols-3 overflow-hidden bg-black font-['Open_Sans',sans-serif]">
      <Defs />
      <div className="min-h-0 min-w-0 pb-[121px]"><FirefoxWindow /></div>
      <div className="min-h-0 min-w-0 pt-[72px] pb-[49px]"><OperaWindow /></div>
      <div className="min-h-0 min-w-0 pt-[121px]"><NotepadWindow /></div>
    </div>
  );
}
